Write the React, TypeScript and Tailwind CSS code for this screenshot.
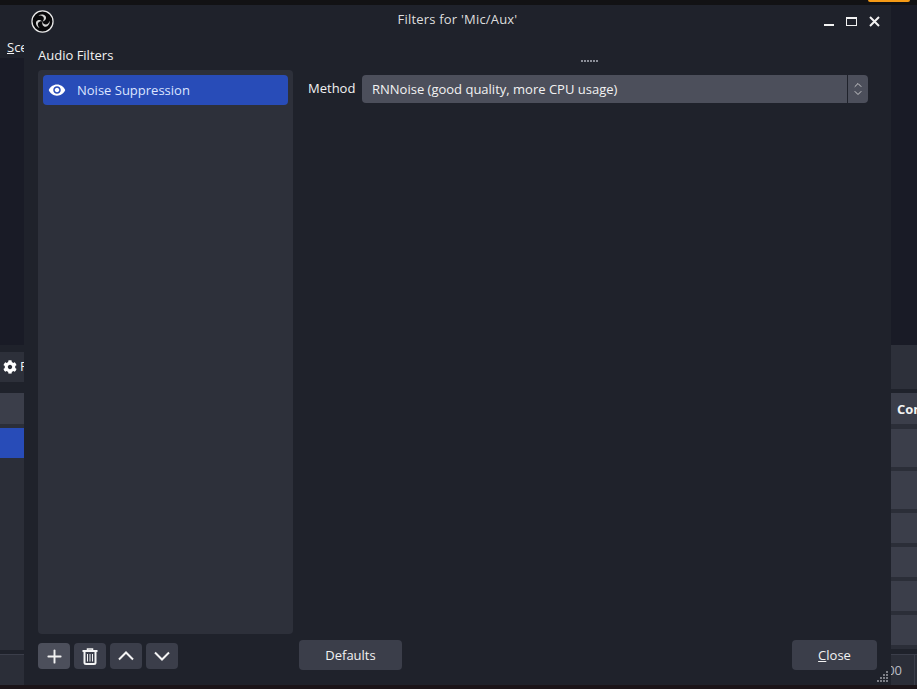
import { Plus, ChevronUp, ChevronDown } from 'lucide-react';
import { FaCog } from 'react-icons/fa';

function ObsLogo() {
  return (
    <svg width="23" height="23" viewBox="0 0 24 24">
      <circle cx="12" cy="12" r="11" fill="#08080a" stroke="#e8e8e8" strokeWidth="1.300" />
      {[0, 120, 240].map((angle) => (
        <path
          key={angle}
          transform={`rotate(${angle} 12 12)`}
          d="M12 12C14.800 11.400 16.600 8.600 15.200 6.400 13.800 4.300 10.200 4 7.600 5.800 10 5.400 12.200 5.900 13 7.400 13.800 9 13.400 10.800 12 12z"
          fill="#d4d4d4"
        />
      ))}
    </svg>
  );
}

function EyeIcon() {
  return (
    <svg width="18" height="18" viewBox="0 0 24 24" fill="#ffffff">
      <path d="M12 4.500C7 4.500 2.730 7.610 1 12c1.730 4.390 6 7.500 11 7.500s9.270-3.110 11-7.500c-1.730-4.390-6-7.500-11-7.500zM12 17c-2.760 0-5-2.240-5-5s2.240-5 5-5 5 2.240 5 5-2.240 5-5 5zm0-8c-1.660 0-3 1.340-3 3s1.340 3 3 3 3-1.340 3-3-1.340-3-3-3z" />
    </svg>
  );
}

function TrashIcon() {
  return (
    <svg width="16" height="17" viewBox="0 0 16 17" fill="none" stroke="#f4f4f4">
      <path d="M0.500 3h15" strokeWidth="2" />
      <path d="M5.500 2.500V1h5v1.500" strokeWidth="1.500" />
      <path d="M2.500 4v10.500a1.500 1.500 0 0 0 1.500 1.500h8a1.500 1.500 0 0 0 1.500-1.500V4" strokeWidth="2" />
      <path d="M5.500 6v7.500M8 6v7.500M10.500 6v7.500" strokeWidth="1" />
    </svg>
  );
}

function ArrowIcon({ points }: { points: string }) {
  return (
    <svg width="16" height="10" viewBox="0 0 16 10" fill="none" stroke="#f4f4f4" strokeWidth="2">
      <polyline points={points} />
    </svg>
  );
}

function ToolButton({ active, children }: { active?: boolean; children: React.ReactNode }) {
  return (
    <div className={`w-[32px] h-[26px] rounded-[4px] flex items-center justify-center ${active ? 'bg-[#4c4f5b]' : 'bg-[#3b3e4a]'}`}>
      {children}
    </div>
  );
}

export default function App() {
  return (
    <div className="w-[917px] h-[689px] flex flex-col overflow-hidden bg-[#1f222b] text-[13px] text-[#f2f2f2] font-['Open_Sans',sans-serif]">
      <div className="h-[5px] shrink-0 bg-[#121214] flex justify-end pr-[7px]">
        <div className="w-[42px] h-[2px] bg-[#f59a16] rounded-b-[2px]"></div>
      </div>

      <div className="flex-1 flex min-h-0">
        {/* main window left edge */}
        <div className="w-[24px] shrink-0 overflow-hidden flex flex-col">
          <div className="h-[53px] shrink-0 pl-[7px] pt-[33px] leading-[18px] whitespace-nowrap">
            <span className="underline">S</span>ce
          </div>
          <div className="h-[287px] shrink-0 bg-[#191b26]"></div>
          <div className="h-[7px] shrink-0"></div>
          <div className="h-[30px] shrink-0 bg-[#2d303a] flex items-center pl-[3px] whitespace-nowrap">
            <FaCog size={14} className="shrink-0 text-white" />
            <span className="pl-[3px]">F</span>
          </div>
          <div className="h-[11px] shrink-0"></div>
          <div className="h-[31px] shrink-0 bg-[#3b3e4a]"></div>
          <div className="h-[4px] shrink-0 bg-[#2b2e38]"></div>
          <div className="h-[30px] shrink-0 bg-[#284cb8]"></div>
          <div className="h-[192px] shrink-0 bg-[#2b2e38]"></div>
          <div className="h-[4px] shrink-0"></div>
          <div className="h-[1px] shrink-0 bg-[#3b3e4a]"></div>
          <div className="flex-1 bg-[#2b2e38]"></div>
        </div>

        {/* dialog */}
        <div className="w-[867px] shrink-0 relative flex flex-col bg-[#1f222b]">
          <div className="h-[33px] shrink-0 flex items-center pl-[7px]">
            <ObsLogo />
            <div className="flex-1 text-center pl-[37px] pb-[3px] tracking-[0.2px] text-[#dedede]">Filters for 'Mic/Aux'</div>
            <div className="flex items-center gap-[12px] pr-[11px]">
              <div className="w-[10px] h-[2px] bg-[#f2f2f2] mt-[7px]"></div>
              <div className="w-[11px] h-[9px] border border-[#f2f2f2] border-t-2"></div>
              <svg width="11" height="11" viewBox="0 0 11 11" stroke="#f2f2f2" strokeWidth="2"><path d="M1 1l9 9M10 1l-9 9" /></svg>
            </div>
          </div>

          <div className="flex-1 flex min-h-0 pl-[14px] pr-[14px] pb-[15px]">
            <div className="w-[255px] shrink-0 flex flex-col">
              <div className="h-[18px] mt-[8px] leading-[18px] shrink-0">Audio Filters</div>
              <div className="mt-[6px] h-[564px] shrink-0 bg-[#2d303a] rounded-[4px] p-[5px]">
                <div className="h-[30px] bg-[#284cb8] rounded-[4px] flex items-center pl-[5px] gap-[11px] text-[#dbe4ff]">
                  <EyeIcon />
                  <span className="pt-[2px]">Noise Suppression</span>
                </div>
              </div>
              <div className="mt-[9px] flex gap-[4px]">
                <ToolButton active><Plus size={21} strokeWidth={2.200} /></ToolButton>
                <ToolButton><TrashIcon /></ToolButton>
                <ToolButton><ArrowIcon points="1,8.500 8,1.500 15,8.500" /></ToolButton>
                <ToolButton><ArrowIcon points="1,1.500 8,8.500 15,1.500" /></ToolButton>
              </div>
            </div>

            <div className="flex-1 flex flex-col min-w-0 pl-[6px]">
              <div className="h-[25px] relative shrink-0">
                <div className="absolute left-[282px] top-[22px] flex gap-[1px]">
                  {[0, 1, 2, 3, 4, 5].map((dot) => (
                    <div key={dot} className="w-[2px] h-[2px] bg-[#8b8e97]"></div>
                  ))}
                </div>
              </div>
              <div className="mt-[12px] pl-[9px] pr-[9px] flex items-center shrink-0">
                <span className="w-[54px] shrink-0">Method</span>
                <div className="flex-1 h-[28px] bg-[#4c4f5b] rounded-[4px] flex items-center justify-between">
                  <span className="pl-[10px] pt-[2px]">RNNoise (good quality, more CPU usage)</span>
                  <div className="w-[21px] h-full border-l border-[#1f222b] flex flex-col items-center justify-center text-[#d8d8d8]">
                    <ChevronUp size={12} strokeWidth={1.800} />
                    <ChevronDown size={12} strokeWidth={1.800} className="mt-[-4px]" />
                  </div>
                </div>
              </div>
              <div className="flex-1"></div>
              <div className="flex justify-between">
                <div className="w-[103px] h-[30px] pt-[2px] bg-[#3b3e4a] rounded-[4px] flex items-center justify-center">Defaults</div>
                <div className="w-[85px] h-[30px] pt-[2px] bg-[#3b3e4a] rounded-[4px] flex items-center justify-center"><span><span className="underline">C</span>lose</span></div>
              </div>
            </div>
          </div>

          <div className="absolute right-[3px] bottom-[3px] grid grid-cols-4 gap-[1px]">
            {[0, 0, 0, 1, 0, 0, 1, 1, 0, 1, 1, 1, 1, 1, 1, 1].map((dot, i) => (
              <div key={i} className={`w-[2px] h-[2px] ${dot ? 'bg-[#7d7f87]' : ''}`}></div>
            ))}
          </div>
        </div>

        {/* main window right edge */}
        <div className="flex-1 min-w-0 overflow-hidden flex flex-col">
          <div className="h-[340px] shrink-0 bg-[#191b26]"></div>
          <div className="h-[44px] shrink-0 bg-[#2d303a]"></div>
          <div className="h-[4px] shrink-0"></div>
          <div className="h-[31px] shrink-0 bg-[#3b3e4a] pl-[6px] font-bold leading-[32px] whitespace-nowrap">Controls</div>
          <div className="flex flex-col gap-[4px] bg-[#2b2e38] pt-[5px] pb-[4px]">
            <div className="h-[38px] bg-[#3b3e4a]"></div>
            <div className="h-[38px] bg-[#3b3e4a]"></div>
            <div className="h-[30px] bg-[#3b3e4a]"></div>
            <div className="h-[30px] bg-[#3b3e4a]"></div>
            <div className="h-[30px] bg-[#3b3e4a]"></div>
            <div className="h-[30px] bg-[#3b3e4a]"></div>
          </div>
          <div className="h-[5px] shrink-0"></div>
          <div className="h-[1px] shrink-0 bg-[#3b3e4a]"></div>
          <div className="flex-1 bg-[#2b2e38] flex">
            <div className="w-[24px] border-r border-[#3b3e4a] flex justify-end pr-[12px] leading-[30px] text-[#b9bcc4] whitespace-nowrap overflow-hidden">00</div>
          </div>
        </div>
      </div>

      <div className="h-[4px] shrink-0 bg-[#1b1418]"></div>
    </div>
  );
}
